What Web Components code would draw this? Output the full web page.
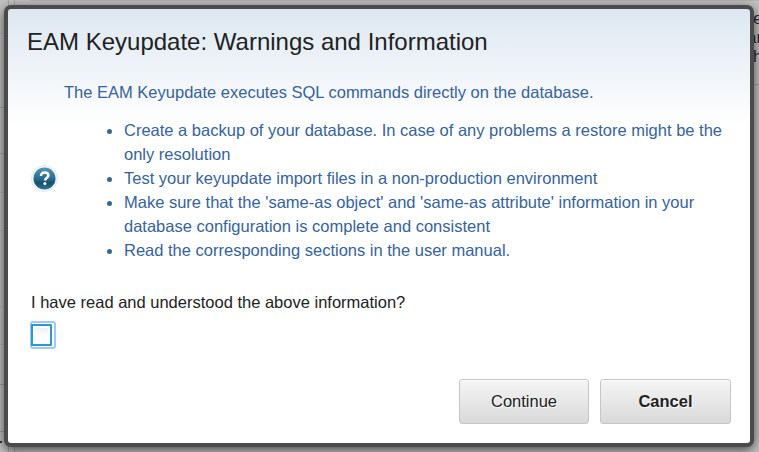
<!DOCTYPE html>
<html lang="en">
<head>
<meta charset="utf-8">
<title>EAM Keyupdate</title>
<style>
html,body{margin:0;width:759px;height:452px;overflow:hidden;font:16.5px/24px "Liberation Sans",Arial,sans-serif}
</style>
</head>
<body>
<app-stage>
  <page-backdrop></page-backdrop>
  <modal-dialog>
    <span slot="title">EAM Keyupdate: Warnings and Information</span>
    <warning-info></warning-info>
    <confirm-check>I have read and understood the above information?</confirm-check>
    <dialog-button slot="actions" style="--w:130px">Continue</dialog-button>
    <dialog-button slot="actions" style="--w:131px;font-weight:bold">Cancel</dialog-button>
  </modal-dialog>
</app-stage>
<script>
function define(name, html){
  customElements.define(name, class extends HTMLElement{
    constructor(){ super(); this.attachShadow({mode:"open"}).innerHTML = html; }
  });
}
define("app-stage", `<style>
:host{display:block;position:relative;width:759px;height:452px;overflow:hidden}
</style><slot></slot>`);

/* The dimmed page, visible only around the edges of the dialog. */
define("page-backdrop", `<style>
:host{position:absolute;inset:0;background:#c3c3c3;color:#292929;overflow:hidden}
i{position:absolute;background:#a6a6a6}
span{position:absolute;white-space:pre;font-size:17px;line-height:19px}
.lite{background:#b5b5b5}
</style>
<i class="lite" style="left:30px;top:0;width:729px;height:1px"></i>
<i style="left:8px;top:0;width:1px;height:452px"></i>
<i style="left:14px;top:0;width:1px;height:452px"></i>
<i class="lite" style="left:0;top:33px;width:8px;height:1px"></i>
<i style="left:0;top:107px;width:8px;height:1px"></i>
<i style="left:0;top:153px;width:8px;height:1px"></i>
<i class="lite" style="left:0;top:192px;width:8px;height:1px"></i>
<i class="lite" style="left:0;top:230px;width:8px;height:1px"></i>
<i class="lite" style="left:0;top:306px;width:8px;height:1px"></i>
<i class="lite" style="left:0;top:344px;width:8px;height:1px"></i>
<i style="left:0;top:384px;width:8px;height:1px"></i>
<i style="left:0;top:431px;width:8px;height:1px"></i>
<i style="left:0;top:441px;width:2px;height:2px;background:#333"></i>
<i style="left:750px;top:84px;width:9px;height:1px"></i>
<span style="left:753px;top:9px">e</span>
<span style="left:747px;top:28px">ar</span>
<span style="left:753px;top:47px">h</span>`);

define("modal-dialog", `<style>
:host{position:absolute;left:4px;top:5px;width:750px;height:442px;box-sizing:border-box;border:4px solid #4b4b4b;border-radius:7px;
background:linear-gradient(#dde7f1 0,#fff 116px) #fff;box-shadow:0 3px 12px rgba(0,0,0,.65);display:flex;flex-direction:column}
h1{margin:0;padding:17px 0 0 19px;font-size:24px;line-height:32px;font-weight:normal;color:#222}
footer{display:flex;gap:11px;justify-content:flex-end;margin-top:auto;padding:0 19px 19px 0}
</style><h1><slot name="title"></slot></h1><slot></slot><footer><slot name="actions"></slot></footer>`);

define("help-icon", `<style>:host{display:block;width:28px;height:28px;margin:16px 0 0 1px}svg{display:block}</style>
<svg width="28" height="28" viewBox="0 0 28 28">
<defs><linearGradient id="g" x2="0" y2="1"><stop offset="0" stop-color="#5595b5"/><stop offset=".45" stop-color="#2f7196"/><stop offset=".7" stop-color="#17506f"/><stop offset="1" stop-color="#2a7899"/></linearGradient></defs>
<circle cx="13.5" cy="13.5" r="13" fill="#f3f6f9" stroke="#dce4eb" stroke-width=".8"/>
<circle cx="13.5" cy="13.5" r="11" fill="url(#g)"/>
<path d="M10 10.9C10 8.5 11.5 7.6 13.6 7.6c2.3 0 3.8 1.2 3.8 3 0 2.2-3.3 2.3-3.3 5" fill="none" stroke="#fff" stroke-width="2.5"/>
<circle cx="13.9" cy="18.5" r="1.5" fill="#fff"/></svg>`);

define("warning-info", `<style>
:host{display:grid;grid-template-columns:34px 1fr;align-items:center;padding:22px 0 0 22px;color:#36639a}
p{margin:0}
ul{margin:14px 0 0;padding:0 0 0 60px;list-style:none}
li{position:relative}
li::before{content:"";position:absolute;left:-17px;top:11px;width:5px;height:5px;border-radius:50%;background:#336699}
</style>
<help-icon></help-icon>
<div><p>The EAM Keyupdate executes SQL commands directly on the database.</p>
<ul><li>Create a backup of your database. In case of any problems a restore might be the<br>only resolution</li>
<li>Test your keyupdate import files in a non-production environment</li>
<li>Make sure that the 'same-as object' and 'same-as attribute' information in your<br>database configuration is complete and consistent</li>
<li>Read the corresponding sections in the user manual.</li></ul></div>`);

define("confirm-check", `<style>
:host{display:block;padding:28px 0 0 22px;color:#222}
label{display:block;padding-left:1px}
.ring{box-sizing:border-box;width:26px;height:28px;margin-top:7px;border:2px solid #a3c6fb;border-radius:3px;background:#fff;padding:1px 0 0}
.box{box-sizing:border-box;width:21px;height:22px;margin-left:-1px;border:2px solid #279bc9;border-radius:1px;background:linear-gradient(#eee,#fff 65%);background-clip:content-box;padding:2px}
</style><label><slot></slot></label><div class="ring" role="checkbox" aria-checked="false"><div class="box"></div></div>`);

define("dialog-button", `<style>
:host{display:block}
button{display:block;width:var(--w);height:45px;margin:0;padding:0 0 2px;font:inherit;color:#222;text-shadow:1px 1px 1px #fff;border:1px solid #c6c6c6;border-radius:3px;
background:linear-gradient(#f5f5f5,#d9d9d9);box-shadow:inset 0 1px #fff}
</style><button><slot></slot></button>`);
</script>
</body>
</html>
